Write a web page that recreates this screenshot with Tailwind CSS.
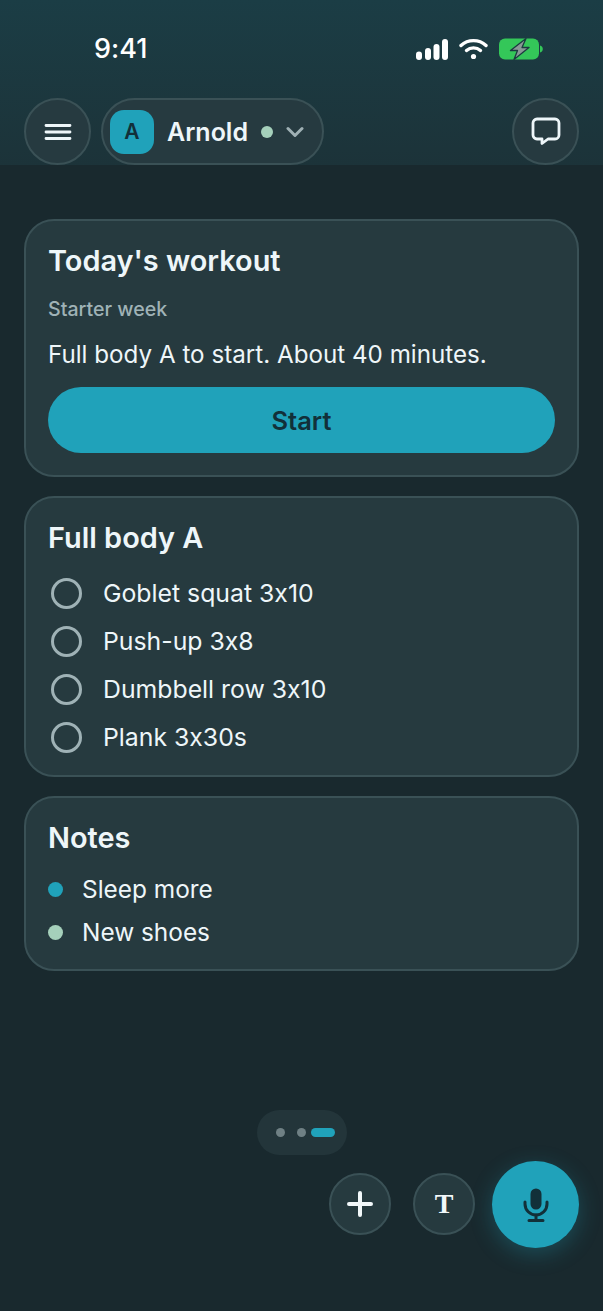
<!doctype html>
<html lang="en">
<head>
<meta charset="utf-8">
<title>Workout</title>
<script src="https://cdn.jsdelivr.net/npm/@tailwindcss/browser@4"></script>
</head>
<body class="bg-[#19292e]">
<div class="relative h-[1311px] w-[603px] overflow-hidden bg-[#19292e] font-['Inter',sans-serif] text-[#eef6f9] [font-feature-settings:'calt'_0]">

  <!-- header -->
  <header class="h-[165px] bg-gradient-to-b from-[#1b3d45] to-[#1c3339] px-6">
    <div class="flex h-[98px] items-start justify-between">
      <span class="ml-[70px] mt-[32px] text-[27px] leading-[34px] font-medium text-white">9:41</span>
      <div class="mr-[36px] mt-[38px] flex items-center gap-[11px]">
        <svg width="32" height="21" viewBox="0 0 32 21" fill="#fff">
          <rect x="0" y="12.5" width="6" height="8.5" rx="3"/>
          <rect x="9" y="9" width="6" height="12" rx="3"/>
          <rect x="17.5" y="5" width="6" height="16" rx="3"/>
          <rect x="26" y="0" width="6" height="21" rx="3"/>
        </svg>
        <svg width="29" height="22" viewBox="0 0 29 22" fill="none" stroke="#fff" stroke-width="3.4" stroke-linecap="round">
          <path d="M2 7.5C9 1 20 1 27 7.5"/>
          <path d="M7.5 12.5C11.5 9 17.5 9 21.5 12.5"/>
          <circle cx="14.5" cy="18.5" r="2.6" fill="#fff" stroke="none"/>
        </svg>
        <svg width="44" height="22" viewBox="0 0 44 22">
          <rect x="0" y="0.5" width="40" height="21" rx="6" fill="#34c759"/>
          <path d="M41 7.5c1.8.5 2.8 1.8 2.8 3.5s-1 3-2.8 3.5z" fill="#34c759"/>
          <path d="M27 0.5 11.5 12.5h7L15 21.5 30 9.5h-7z" fill="#8a9896" stroke="#1c3a40" stroke-width="1.3" stroke-linejoin="round"/>
        </svg>
      </div>
    </div>
    <div class="flex items-center justify-between">
      <div class="flex items-center gap-[10px]">
        <button class="flex h-[67px] w-[67px] items-center justify-center rounded-full border-2 border-[#3a5156] bg-[#263a40]">
          <svg width="28" height="18" viewBox="0 0 28 18" fill="none" stroke="#eef6f9" stroke-width="2.8" stroke-linecap="round">
            <path d="M2 2.5h24M2 9h24M2 15.5h24"/>
          </svg>
        </button>
        <div class="flex h-[67px] w-[223px] items-center rounded-full border-2 border-[#3a5156] bg-[#263a40] pl-[7px]">
          <span class="flex h-[44px] w-[44px] items-center justify-center rounded-[14px] bg-[#20a2ba] text-[21px] font-semibold text-[#123039]">A</span>
          <span class="ml-[13px] mt-[3px] text-[25px] font-semibold">Arnold</span>
          <span class="ml-[13px] h-[12px] w-[12px] rounded-full bg-[#a5d0bb]"></span>
          <svg class="ml-[13px]" width="18" height="12" viewBox="0 0 18 12" fill="none" stroke="#9fb0b4" stroke-width="3" stroke-linecap="round" stroke-linejoin="round">
            <path d="M2 2.5 9 9.5l7-7"/>
          </svg>
        </div>
      </div>
      <button class="flex h-[67px] w-[67px] items-center justify-center rounded-full border-2 border-[#3a5156] bg-[#263a40]">
        <svg width="30" height="29" viewBox="0 0 30 29" fill="none" stroke="#eef6f9" stroke-width="2.8" stroke-linejoin="round">
          <path d="M6 2h18a4 4 0 0 1 4 4v12a4 4 0 0 1-4 4h-7l-6 4.5V22H6a4 4 0 0 1-4-4V6a4 4 0 0 1 4-4z"/>
        </svg>
      </button>
    </div>
  </header>

  <main class="flex flex-col gap-[19px] px-6 pt-[54px]">
    <!-- today's workout -->
    <section class="h-[258px] rounded-[30px] border-2 border-[#3a5156] bg-[#263a3f] px-[22px] pt-[22px]">
      <h2 class="text-[28.9px] leading-[36px] font-semibold">Today's workout</h2>
      <p class="mt-[18px] text-[19.6px] leading-[24px] font-medium text-[#9fb2b6]">Starter week</p>
      <p class="mt-[18px] text-[24.2px] leading-[32px]">Full body A to start. About 40 minutes.</p>
      <button class="mt-[16px] block h-[66px] w-[507px] rounded-[33px] bg-[#20a2ba] pt-[2px] text-[25.5px] font-semibold text-[#123039]">Start</button>
    </section>

    <!-- exercises -->
    <section class="h-[281px] rounded-[30px] border-2 border-[#3a5156] bg-[#263a3f] px-[22px] pt-[22px]">
      <h2 class="text-[28.9px] leading-[36px] font-semibold">Full body A</h2>
      <ul class="mt-[21px] flex flex-col gap-[16px] text-[24.8px] leading-[32px]">
        <li class="flex items-center gap-[21px]"><span class="ml-[3px] h-[31px] w-[31px] rounded-full border-[3.5px] border-[#9fb2b6]"></span>Goblet squat 3x10</li>
        <li class="flex items-center gap-[21px]"><span class="ml-[3px] h-[31px] w-[31px] rounded-full border-[3.5px] border-[#9fb2b6]"></span>Push-up 3x8</li>
        <li class="flex items-center gap-[21px]"><span class="ml-[3px] h-[31px] w-[31px] rounded-full border-[3.5px] border-[#9fb2b6]"></span>Dumbbell row 3x10</li>
        <li class="flex items-center gap-[21px]"><span class="ml-[3px] h-[31px] w-[31px] rounded-full border-[3.5px] border-[#9fb2b6]"></span>Plank 3x30s</li>
      </ul>
    </section>

    <!-- notes -->
    <section class="h-[175px] rounded-[30px] border-2 border-[#3a5156] bg-[#263a3f] px-[22px] pt-[22px]">
      <h2 class="text-[28.9px] leading-[36px] font-semibold">Notes</h2>
      <ul class="mt-[17px] flex flex-col gap-[10px] text-[24.4px] leading-[32px]">
        <li class="flex items-center gap-[19px]"><span class="mt-[1px] h-[15px] w-[15px] rounded-full bg-[#20a2ba]"></span>Sleep more</li>
        <li class="flex items-center gap-[19px]"><span class="mt-[2px] h-[15px] w-[15px] rounded-full bg-[#a5d0bb]"></span><span class="mt-[1px]">New shoes</span></li>
      </ul>
    </section>
  </main>

  <!-- page dots -->
  <div class="absolute left-[257px] top-[1110px] flex h-[45px] w-[90px] items-center rounded-full bg-[#23353a] pl-[19px]">
    <span class="h-[9px] w-[9px] rounded-full bg-[#6f8084]"></span>
    <span class="ml-[12px] h-[9px] w-[9px] rounded-full bg-[#6f8084]"></span>
    <span class="ml-[5px] h-[9px] w-[24px] rounded-full bg-[#20a2ba]"></span>
  </div>

  <!-- floating actions -->
  <button class="absolute left-[329px] top-[1173px] flex h-[62px] w-[62px] items-center justify-center rounded-full border-2 border-[#3a5156] bg-[#263a3f]">
    <svg width="26" height="26" viewBox="0 0 26 26" fill="none" stroke="#f2f8fa" stroke-width="4" stroke-linecap="round">
      <path d="M13 2v22M2 13h22"/>
    </svg>
  </button>
  <button class="absolute left-[413px] top-[1173px] flex h-[62px] w-[62px] items-center justify-center rounded-full border-2 border-[#3a5156] bg-[#263a3f] font-['Liberation_Serif',serif] text-[28px] font-bold text-[#f2f8fa]">T</button>
  <button class="absolute left-[492px] top-[1161px] flex h-[87px] w-[87px] items-center justify-center rounded-full bg-[#20a2ba] shadow-[0_6px_22px_rgba(32,162,186,0.3)]">
    <svg width="26" height="34" viewBox="0 0 26 34" fill="none" stroke="#123039" stroke-width="3" stroke-linecap="round">
      <rect x="7.5" y="0.5" width="11" height="21" rx="5.5" fill="#123039" stroke="none"/>
      <path d="M2 14v2a11 11 0 0 0 22 0v-2"/>
      <path d="M13 27v5M6 32.5h14"/>
    </svg>
  </button>
</div>
</body>
</html>
